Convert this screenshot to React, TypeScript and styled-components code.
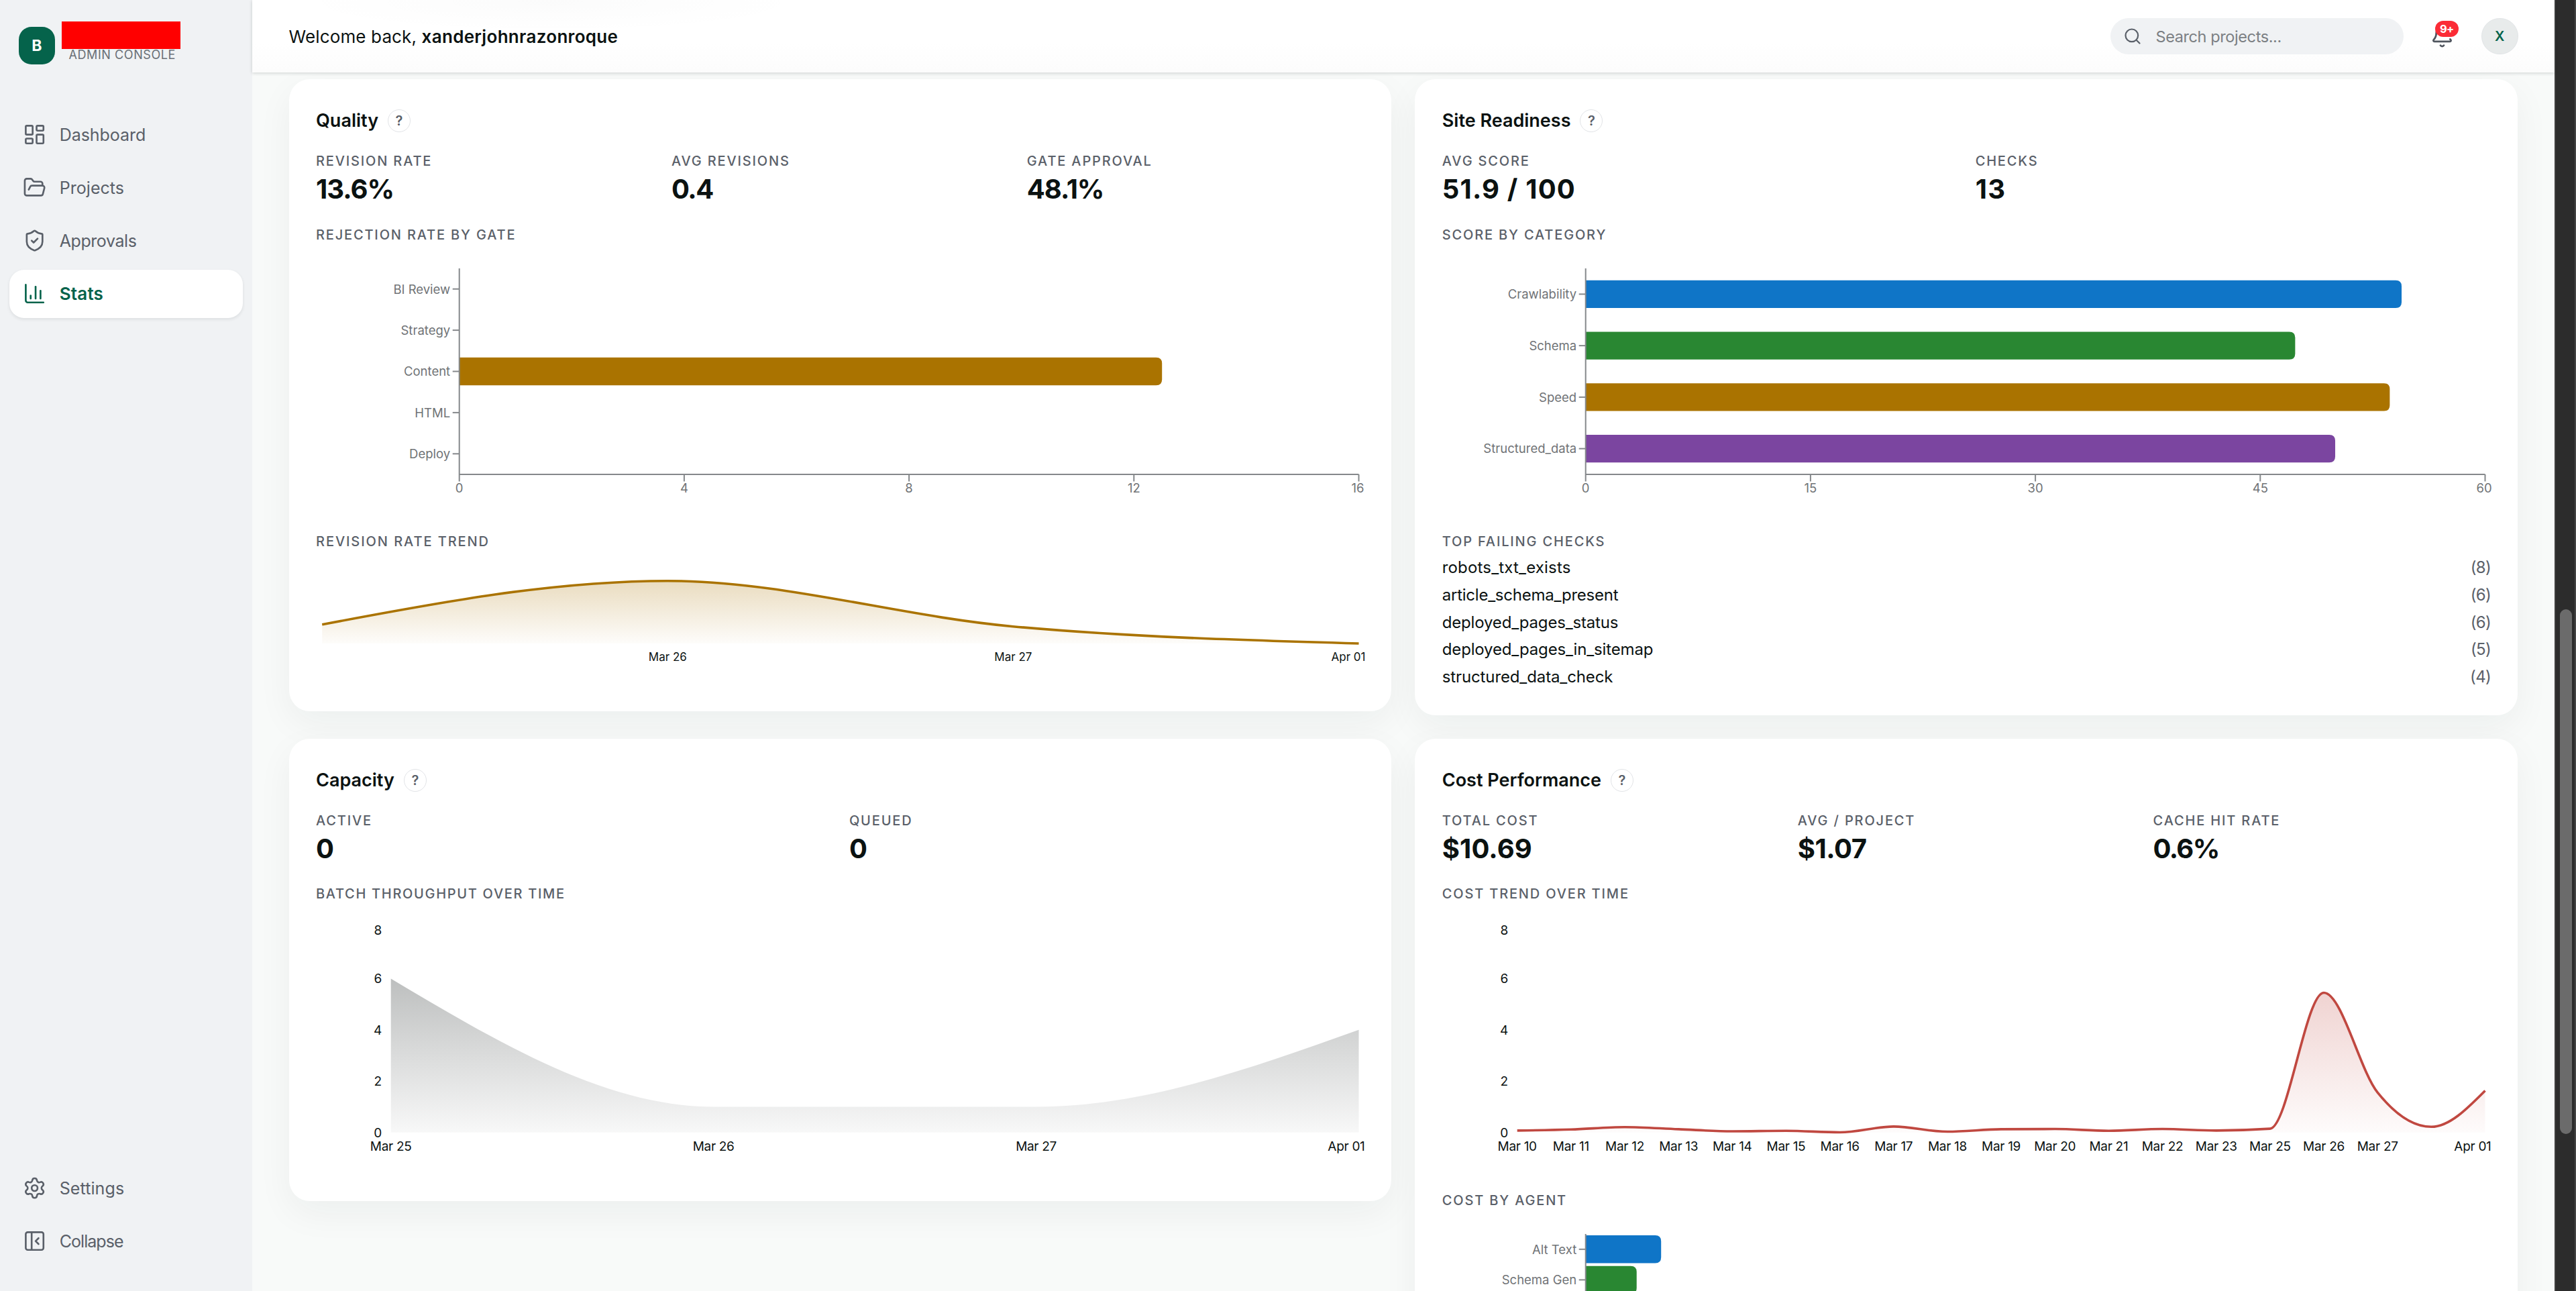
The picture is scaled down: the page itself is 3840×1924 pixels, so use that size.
import React from "react";
import styled, { createGlobalStyle } from "styled-components";
import {
  BellDot,
  ChartColumn,
  FolderOpen,
  LayoutDashboard,
  PanelLeftClose,
  Search,
  Settings,
  ShieldCheck,
} from "lucide-react";

const color = {
  ink: "#0b1211",
  muted: "#5a6069",
  axis: "#85888b",
  tick: "#707376",
  green: "#05634b",
  rail: "#f0f2f4",
  page: "#f8faf9",
  blue: "#0f75c7",
  leaf: "#298732",
  gold: "#aa7300",
  purple: "#7b45a0",
  red: "#c04840",
};

const GlobalStyle = createGlobalStyle`
  *, *::before, *::after { box-sizing: border-box; }
  body {
    margin: 0;
    overflow: hidden;
    background: ${color.page};
    color: ${color.ink};
    font-family: Inter, "Liberation Sans", sans-serif;
    -webkit-font-smoothing: antialiased;
  }
`;

const Shell = styled.div`
  display: grid;
  grid-template-columns: 375.5px 1fr 32px;
  width: 3840px;
  height: 1924px;
  overflow: hidden;
`;

/* ---------- Sidebar ---------- */

const Sidebar = styled.aside`
  display: flex;
  flex-direction: column;
  min-height: 0;
  padding: 32px 14px 38.5px;
  background: ${color.rail};
`;

const Brand = styled.div`
  display: flex;
  align-items: flex-start;
  gap: 9.5px;
  height: 132.5px;
  padding-left: 13.5px;
`;

const Logo = styled.div`
  display: flex;
  align-items: center;
  justify-content: center;
  width: 54.5px;
  height: 56px;
  margin-top: 8px;
  border-radius: 19px;
  background: ${color.green};
  color: #fff;
  font-size: 23px;
  font-weight: 700;
`;

const BrandName = styled.div`
  width: 177.5px;
  height: 41px;
  background: #ff0000;
`;

const BrandRole = styled.div`
  padding-left: 11px;
  color: #6a6f76;
  font-size: 18px;
  line-height: 18.4px;
  letter-spacing: 0.58px;
`;

const NavList = styled.nav`
  display: flex;
  flex-direction: column;
  gap: 7px;
`;

const Spacer = styled.div`
  flex: 1;
`;

const NavItem = styled.a<{ $active?: boolean; $tracking: number }>`
  display: flex;
  align-items: center;
  gap: 20px;
  height: 72px;
  padding-left: 19.5px;
  border-radius: 22px;
  color: ${(p) => (p.$active ? color.green : color.muted)};
  background: ${(p) => (p.$active ? "#fff" : "transparent")};
  box-shadow: ${(p) => (p.$active ? "0 2px 5px rgba(10, 20, 20, 0.09)" : "none")};
  font-size: ${(p) => (p.$active ? 26 : 25)}px;
  font-weight: ${(p) => (p.$active ? 600 : 400)};
  letter-spacing: ${(p) => p.$tracking}px;
`;

/* ---------- Header ---------- */

const Main = styled.main`
  display: flex;
  flex-direction: column;
  min-width: 0;
  min-height: 0;
`;

const Header = styled.header`
  position: relative;
  z-index: 1;
  display: flex;
  flex: none;
  align-items: center;
  height: 108px;
  padding: 0 54.5px 0 55px;
  background:
    radial-gradient(closest-side, rgba(10, 20, 20, 0.016), rgba(10, 20, 20, 0)) 55px -42px / 780px 90px no-repeat,
    linear-gradient(#fff 60%, #fcfcfc);
  box-shadow: 0 1px 5px rgba(10, 20, 20, 0.18);
`;

const Welcome = styled.div`
  flex: 1;
  font-size: 26px;
  letter-spacing: 0.14px;

  strong {
    font-weight: 600;
    letter-spacing: 0.31px;
  }
`;

const SearchBox = styled.div`
  display: flex;
  align-items: center;
  gap: 20.5px;
  width: 437.5px;
  height: 54px;
  padding-left: 19.5px;
  border-radius: 27px;
  background: ${color.rail};
  color: ${color.muted};

  span {
    color: #7b7f83;
    font-size: 23.5px;
    letter-spacing: -0.4px;
  }
`;

const BellButton = styled.div`
  position: relative;
  display: flex;
  margin: 0 41px 0 40px;
  color: #4f555e;
`;

const Badge = styled.span`
  position: absolute;
  top: -5.5px;
  left: 6.5px;
  display: flex;
  align-items: center;
  justify-content: center;
  width: 35.5px;
  height: 24px;
  border-radius: 12px;
  background: #fb2c36;
  color: #fff;
  font-size: 16.5px;
  font-weight: 700;
  letter-spacing: -0.6px;
`;

const Avatar = styled.div`
  display: flex;
  align-items: center;
  justify-content: center;
  width: 54.5px;
  height: 54.5px;
  border: 1px solid #e2e5e7;
  border-radius: 50%;
  background: #e8ebeb;
  color: ${color.green};
  font-size: 20px;
  font-weight: 600;
`;

/* ---------- Cards ---------- */

const Content = styled.div`
  display: grid;
  flex: 1;
  grid-template-columns: 1fr 1fr;
  align-content: start;
  align-items: start;
  gap: 35px;
  min-height: 0;
  padding: 10.3px 55px 0 55px;
  overflow: hidden;
`;

const Card = styled.section`
  display: flex;
  flex-direction: column;
  padding: 45px 40px 36.7px 40.5px;
  border-radius: 31px;
  background: #fff;
  box-shadow: 0 18px 53px rgba(20, 30, 35, 0.05);
`;

const CardHead = styled.div`
  display: flex;
  align-items: center;
  gap: 14px;
  height: 34px;
`;

const CardTitle = styled.h2`
  margin: -1px 0 0;
  font-size: 27px;
  font-weight: 600;
`;

const Help = styled.span`
  display: flex;
  align-items: center;
  justify-content: center;
  width: 34px;
  height: 34px;
  border: 1.5px solid #e2e4e7;
  border-radius: 50%;
  color: ${color.muted};
  font-size: 20px;
  font-weight: 600;
`;

const StatRow = styled.div<{ $cols: number }>`
  display: grid;
  grid-template-columns: repeat(${(p) => p.$cols}, 1fr);
  gap: 26.5px;
  margin: 31px 0 31.5px;
`;

const Stat = styled.div`
  display: flex;
  flex-direction: column;
  gap: 6px;
`;

const Label = styled.div<{ $tracking?: number }>`
  color: ${color.muted};
  font-size: 20px;
  font-weight: 450;
  line-height: 24px;
  letter-spacing: ${(p) => p.$tracking ?? 1.84}px;
  text-transform: uppercase;
`;

const NextLabel = styled(Label)`
  margin-top: 48.3px;
`;

const Value = styled.div<{ $tracking: number }>`
  font-size: 40px;
  font-weight: 700;
  line-height: 48px;
  letter-spacing: ${(p) => p.$tracking}px;
  white-space: nowrap;
`;

const FailList = styled.ul`
  display: flex;
  flex-direction: column;
  margin: 7px 0 -0.7px;
  padding: 0;
  list-style: none;
`;

const FailItem = styled.li<{ $tracking: number }>`
  display: flex;
  justify-content: space-between;
  font-size: 24px;
  line-height: 40.7px;
  letter-spacing: ${(p) => p.$tracking}px;

  span:last-child {
    color: ${color.muted};
    letter-spacing: -0.7px;
  }
`;

/* ---------- Scrollbar ---------- */

const ScrollTrack = styled.div`
  display: flex;
  flex-direction: column;
  align-items: center;
  padding-top: 908px;
  border-left: 2px solid #3d3d3d;
  border-right: 2px solid #454545;
  background: #2c2c2c;
`;

const ScrollThumb = styled.div`
  width: 17.5px;
  height: 782px;
  margin-left: 2px;
  border-radius: 9px;
  background: #6b6b6b;
`;

/* ---------- Charts ---------- */

const ChartSvg = styled.svg`
  display: block;
  flex: none;
  width: 100%;
  overflow: visible;
  font-family: Inter, "Liberation Sans", sans-serif;
`;

type Bar = { name: string; value: number; fill: string };

const PLOT_RIGHT = 1554.5;
const BAR_LEFT = 213.7;
const BAR_SIZE = 41.4;
const PLOT_TOP = 38;
const PLOT_BOTTOM = 345;

function BarChart({
  data,
  max,
  ticks = [],
  band,
}: {
  data: Bar[];
  max: number;
  ticks?: number[];
  band: number;
}) {
  const x = (v: number) => BAR_LEFT + ((PLOT_RIGHT - BAR_LEFT) * v) / max;
  return (
    <ChartSvg height={385}>
      {data.map((d, i) => {
        const cy = PLOT_TOP + band * (i + 0.5);
        const y0 = cy - BAR_SIZE / 2;
        const y1 = cy + BAR_SIZE / 2;
        const right = x(d.value);
        const r = 8.8;
        return (
          <g key={d.name}>
            {d.value > 0 && (
              <path
                d={`M${BAR_LEFT},${y0}H${right - r}Q${right},${y0} ${right},${y0 + r}V${y1 - r}Q${right},${y1} ${right - r},${y1}H${BAR_LEFT}Z`}
                fill={d.fill}
              />
            )}
            <path d={`M${BAR_LEFT - 10},${cy}H${BAR_LEFT}`} stroke={color.axis} strokeWidth={2} />
            <text x={BAR_LEFT - 13.5} y={cy + 6.8} textAnchor="end" fontSize={18.5} fill={color.tick}>
              {d.name}
            </text>
          </g>
        );
      })}
      <path d={`M${BAR_LEFT},${PLOT_TOP}V${PLOT_BOTTOM}`} stroke={color.axis} strokeWidth={2} />
      <path d={`M${BAR_LEFT},${PLOT_BOTTOM}H${PLOT_RIGHT}`} stroke={color.axis} strokeWidth={2} />
      {ticks.map((t, i) => (
        <g key={t}>
          <path d={`M${x(t)},${PLOT_BOTTOM}v10.5`} stroke={color.axis} strokeWidth={2} />
          <text
            x={x(t) - (i === ticks.length - 1 ? 1.5 : 0)}
            y={PLOT_BOTTOM + 26.5}
            textAnchor="middle"
            fontSize={18.5}
            fill={color.tick}
          >
            {t}
          </text>
        </g>
      ))}
    </ChartSvg>
  );
}

type Pt = [number, number];

/* Monotone cubic interpolation through the points. */
function monotonePath(pts: Pt[]): string {
  const n = pts.length;
  const slope = (i: number) => (pts[i + 1][1] - pts[i][1]) / (pts[i + 1][0] - pts[i][0]);
  const m: number[] = new Array(n).fill(0);
  for (let i = 1; i < n - 1; i++) {
    const h0 = pts[i][0] - pts[i - 1][0];
    const h1 = pts[i + 1][0] - pts[i][0];
    const s0 = slope(i - 1);
    const s1 = slope(i);
    const p = (s0 * h1 + s1 * h0) / (h0 + h1);
    m[i] = (Math.sign(s0) + Math.sign(s1)) * Math.min(Math.abs(s0), Math.abs(s1), 0.5 * Math.abs(p));
  }
  m[0] = (3 * slope(0) - m[1]) / 2;
  m[n - 1] = (3 * slope(n - 2) - m[n - 2]) / 2;
  let d = `M${pts[0][0]},${pts[0][1]}`;
  for (let i = 0; i < n - 1; i++) {
    const h = (pts[i + 1][0] - pts[i][0]) / 3;
    d += `C${pts[i][0] + h},${pts[i][1] + m[i] * h} ${pts[i + 1][0] - h},${pts[i + 1][1] - m[i + 1] * h} ${pts[i + 1][0]},${pts[i + 1][1]}`;
  }
  return d;
}

function AreaChart({
  id,
  height,
  left,
  top,
  bottom,
  max,
  values,
  labels,
  yTicks = [],
  stroke,
  fill,
  strokeWidth = 3.6,
  opacity,
  fontSize,
  lastX,
}: {
  id: string;
  height: number;
  left: number;
  top: number;
  bottom: number;
  max: number;
  values: number[];
  labels: string[];
  yTicks?: number[];
  stroke?: string;
  fill: string;
  strokeWidth?: number;
  opacity: [number, number];
  fontSize: number;
  lastX: number;
}) {
  const step = (PLOT_RIGHT - left) / (values.length - 1);
  const y = (v: number) => bottom - ((bottom - top) * v) / max;
  const pts: Pt[] = values.map((v, i) => [left + step * i, y(v)]);
  const line = monotonePath(pts);
  return (
    <ChartSvg height={height}>
      <defs>
        <linearGradient id={id} x1="0" y1="0" x2="0" y2="1">
          <stop offset="0" stopColor={fill} stopOpacity={opacity[0]} />
          <stop offset="1" stopColor={fill} stopOpacity={opacity[1]} />
        </linearGradient>
      </defs>
      <path d={`${line}V${bottom}H${left}Z`} fill={`url(#${id})`} />
      {stroke && <path d={line} fill="none" stroke={stroke} strokeWidth={strokeWidth} />}
      {yTicks.map((t) => (
        <text
          key={t}
          x={left - 13.5}
          y={y(t) + (t === max ? 11 : 6.8)}
          textAnchor="end"
          fontSize={fontSize}
          fill={color.ink}
        >
          {t}
        </text>
      ))}
      {labels.map((l, i) => {
        const last = i === labels.length - 1;
        return (
          <text
            key={i}
            x={last ? lastX : pts[i][0]}
            y={bottom + (yTicks.length ? 27.5 : 26.3)}
            textAnchor={last ? "end" : "middle"}
            fontSize={fontSize}
            letterSpacing={yTicks.length ? -0.3 : 0}
            fill={color.ink}
          >
            {l}
          </text>
        );
      })}
    </ChartSvg>
  );
}

/* ---------- Data ---------- */

const nav = [
  { name: "Dashboard", icon: LayoutDashboard, tracking: -0.05 },
  { name: "Projects", icon: FolderOpen, tracking: 0.05 },
  { name: "Approvals", icon: ShieldCheck, tracking: -0.42 },
  { name: "Stats", icon: ChartColumn, tracking: 0.2, active: true },
];

const footerNav = [
  { name: "Settings", icon: Settings, tracking: 0.1 },
  { name: "Collapse", icon: PanelLeftClose, tracking: -0.95 },
];

const failing: [string, number, number][] = [
  ["robots_txt_exists", 8, 0.17],
  ["article_schema_present", 6, -0.24],
  ["deployed_pages_status", 6, -0.17],
  ["deployed_pages_in_sitemap", 5, -0.15],
  ["structured_data_check", 4, -0.12],
];

const gateBars: Bar[] = [
  { name: "BI Review", value: 0, fill: color.blue },
  { name: "Strategy", value: 0, fill: color.leaf },
  { name: "Content", value: 12.5, fill: color.gold },
  { name: "HTML", value: 0, fill: color.purple },
  { name: "Deploy", value: 0, fill: color.red },
];

const categoryBars: Bar[] = [
  { name: "Crawlability", value: 54.43, fill: color.blue },
  { name: "Schema", value: 47.33, fill: color.leaf },
  { name: "Speed", value: 53.64, fill: color.gold },
  { name: "Structured_data", value: 50, fill: color.purple },
];

const agentBars: Bar[] = [
  { name: "Alt Text", value: 8.39, fill: color.blue },
  { name: "Schema Gen", value: 5.67, fill: color.leaf },
];

const costValues = [
  0.075, 0.115, 0.21, 0.125, 0.045, 0.065, 0.005, 0.23, 0.03, 0.125, 0.135, 0.065, 0.135, 0.075,
  0.145, 5.45, 1.56, 0.22, 1.63,
];

const costLabels = [
  "Mar 10", "Mar 11", "Mar 12", "Mar 13", "Mar 14", "Mar 15", "Mar 16", "Mar 17", "Mar 18", "Mar 19",
  "Mar 20", "Mar 21", "Mar 22", "Mar 23", "Mar 25", "Mar 26", "Mar 27", "", "Apr 01",
];

type StatData = { label: string; value: string; tracking: number };

function Head({ title }: { title: string }) {
  return (
    <CardHead>
      <CardTitle>{title}</CardTitle>
      <Help>?</Help>
    </CardHead>
  );
}

function Stats({ items }: { items: StatData[] }) {
  return (
    <StatRow $cols={items.length}>
      {items.map((s) => (
        <Stat key={s.label}>
          <Label>{s.label}</Label>
          <Value $tracking={s.tracking}>{s.value}</Value>
        </Stat>
      ))}
    </StatRow>
  );
}

export default function App() {
  return (
    <>
      <GlobalStyle />
      <Shell>
        <Sidebar>
          <Brand>
            <Logo>B</Logo>
            <div>
              <BrandName />
              <BrandRole>ADMIN CONSOLE</BrandRole>
            </div>
          </Brand>
          <NavList>
            {nav.map(({ name, icon: Icon, tracking, active }) => (
              <NavItem key={name} $active={active} $tracking={tracking}>
                <Icon size={35.2} strokeWidth={1.8} />
                {name}
              </NavItem>
            ))}
          </NavList>
          <Spacer />
          <NavList>
            {footerNav.map(({ name, icon: Icon, tracking }) => (
              <NavItem key={name} $tracking={tracking}>
                <Icon size={35.2} strokeWidth={1.8} />
                {name}
              </NavItem>
            ))}
          </NavList>
        </Sidebar>

        <Main>
          <Header>
            <Welcome>
              Welcome back, <strong>xanderjohnrazonroque</strong>
            </Welcome>
            <SearchBox>
              <Search size={28} strokeWidth={1.9} />
              <span>Search projects...</span>
            </SearchBox>
            <BellButton>
              <BellDot size={35} strokeWidth={1.9} />
              <Badge>9+</Badge>
            </BellButton>
            <Avatar>X</Avatar>
          </Header>

          <Content>
            <Card>
              <Head title="Quality" />
              <Stats
                items={[
                  { label: "Revision rate", value: "13.6%", tracking: -0.97 },
                  { label: "Avg revisions", value: "0.4", tracking: -1.4 },
                  { label: "Gate approval", value: "48.1%", tracking: -1.06 },
                ]}
              />
              <Label>Rejection rate by gate</Label>
              <BarChart data={gateBars} max={16} ticks={[0, 4, 8, 12, 16]} band={61.4} />
              <NextLabel $tracking={1.93}>Revision rate trend</NextLabel>
              <AreaChart
                id="revision"
                height={204.3}
                left={9.2}
                top={46.7}
                bottom={140}
                max={93.3}
                values={[28.3, 93.3, 25.3, 0]}
                labels={["", "Mar 26", "Mar 27", "Apr 01"]}
                stroke={color.gold}
                fill={color.gold}
                opacity={[0.25, 0.02]}
                fontSize={17}
                lastX={1564.5}
              />
            </Card>

            <Card>
              <Head title="Site Readiness" />
              <Stats
                items={[
                  { label: "Avg score", value: "51.9 / 100", tracking: 1.19 },
                  { label: "Checks", value: "13", tracking: 1.5 },
                ]}
              />
              <Label>Score by category</Label>
              <BarChart data={categoryBars} max={60} ticks={[0, 15, 30, 45, 60]} band={76.75} />
              <NextLabel>Top failing checks</NextLabel>
              <FailList>
                {failing.map(([name, count, tracking]) => (
                  <FailItem key={name} $tracking={tracking}>
                    <span>{name}</span>
                    <span>({count})</span>
                  </FailItem>
                ))}
              </FailList>
            </Card>

            <Card>
              <Head title="Capacity" />
              <Stats
                items={[
                  { label: "Active", value: "0", tracking: 0 },
                  { label: "Queued", value: "0", tracking: 0 },
                ]}
              />
              <Label $tracking={1.69}>Batch throughput over time</Label>
              <AreaChart
                id="throughput"
                height={409}
                left={111.7}
                top={38}
                bottom={343.7}
                max={8}
                values={[6, 1, 1, 4]}
                labels={["Mar 25", "Mar 26", "Mar 27", "Apr 01"]}
                yTicks={[0, 2, 4, 6, 8]}
                fill={color.ink}
                opacity={[0.27, 0.03]}
                fontSize={19}
                lastX={1563.5}
              />
            </Card>

            <Card>
              <Head title="Cost Performance" />
              <Stats
                items={[
                  { label: "Total cost", value: "$10.69", tracking: 0.12 },
                  { label: "Avg / project", value: "$1.07", tracking: -0.45 },
                  { label: "Cache hit rate", value: "0.6%", tracking: -1.6 },
                ]}
              />
              <Label>Cost trend over time</Label>
              <AreaChart
                id="cost"
                height={385}
                left={111.7}
                top={38}
                bottom={343.7}
                max={8}
                values={costValues}
                labels={costLabels}
                yTicks={[0, 2, 4, 6, 8]}
                stroke={color.red}
                fill={color.red}
                opacity={[0.24, 0.02]}
                fontSize={19}
                lastX={1563.5}
              />
              <NextLabel>Cost by agent</NextLabel>
              <BarChart data={agentBars} max={100} band={45.6} />
            </Card>
          </Content>
        </Main>

        <ScrollTrack>
          <ScrollThumb />
        </ScrollTrack>
      </Shell>
    </>
  );
}
